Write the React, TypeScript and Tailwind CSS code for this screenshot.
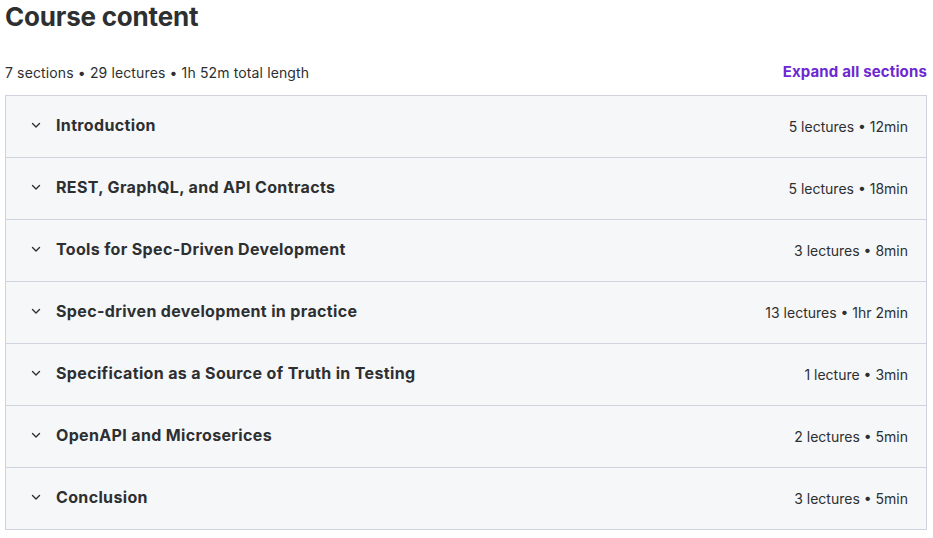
import React from "react";

const sections = [
  { title: "Introduction", meta: "5 lectures • 12min" },
  { title: "REST, GraphQL, and API Contracts", meta: "5 lectures • 18min" },
  { title: "Tools for Spec-Driven Development", meta: "3 lectures • 8min" },
  { title: "Spec-driven development in practice", meta: "13 lectures • 1hr 2min" },
  { title: "Specification as a Source of Truth in Testing", meta: "1 lecture • 3min" },
  { title: "OpenAPI and Microserices", meta: "2 lectures • 5min" },
  { title: "Conclusion", meta: "3 lectures • 5min" },
];

function Chevron() {
  return (
    <svg width="12" height="12" viewBox="0 0 12 12" fill="none" className="shrink-0 mb-[3px]">
      <path d="M2.5 4.5 L6 8 L9.5 4.5" stroke="#2d2f31" strokeWidth="1.4" strokeLinecap="round" strokeLinejoin="round" />
    </svg>
  );
}

export default function App() {
  return (
    <div className="w-[933px] h-[538px] bg-white text-[#2d2f31] font-['Inter',sans-serif] overflow-hidden">
      <h2 className="px-[5px] pt-[1px] text-[26px] leading-[32px] font-bold tracking-[-0.2px]">Course content</h2>
      <div className="flex items-center justify-between pl-[5px] pr-[6px] mt-[29px] h-[20px]">
        <span className="text-[14px] tracking-[0.13px] text-[#2d2f31]">7 sections • 29 lectures • 1h 52m total length</span>
        <span className="text-[15px] font-bold tracking-[0.15px] text-[#6d28d2] mt-[1px]">Expand all sections</span>
      </div>
      <div className="ml-[5px] w-[922px] mt-[13px] border border-[#d1d2e0] bg-[#f6f7f9]">
        {sections.map((s, i) => (
          <div
            key={s.title}
            className={`flex items-center pl-[24px] pr-[18px] ${i > 0 ? "h-[62px] border-t border-[#d1d2e0]" : "h-[61px]"}`}
          >
            <Chevron />
            <span className="ml-[14px] pb-[4px] text-[16px] font-bold tracking-[0.35px] text-[#2d2f31] flex-1">{s.title}</span>
            <span className="text-[14px] text-[#2d2f31]">{s.meta}</span>
          </div>
        ))}
      </div>
    </div>
  );
}
